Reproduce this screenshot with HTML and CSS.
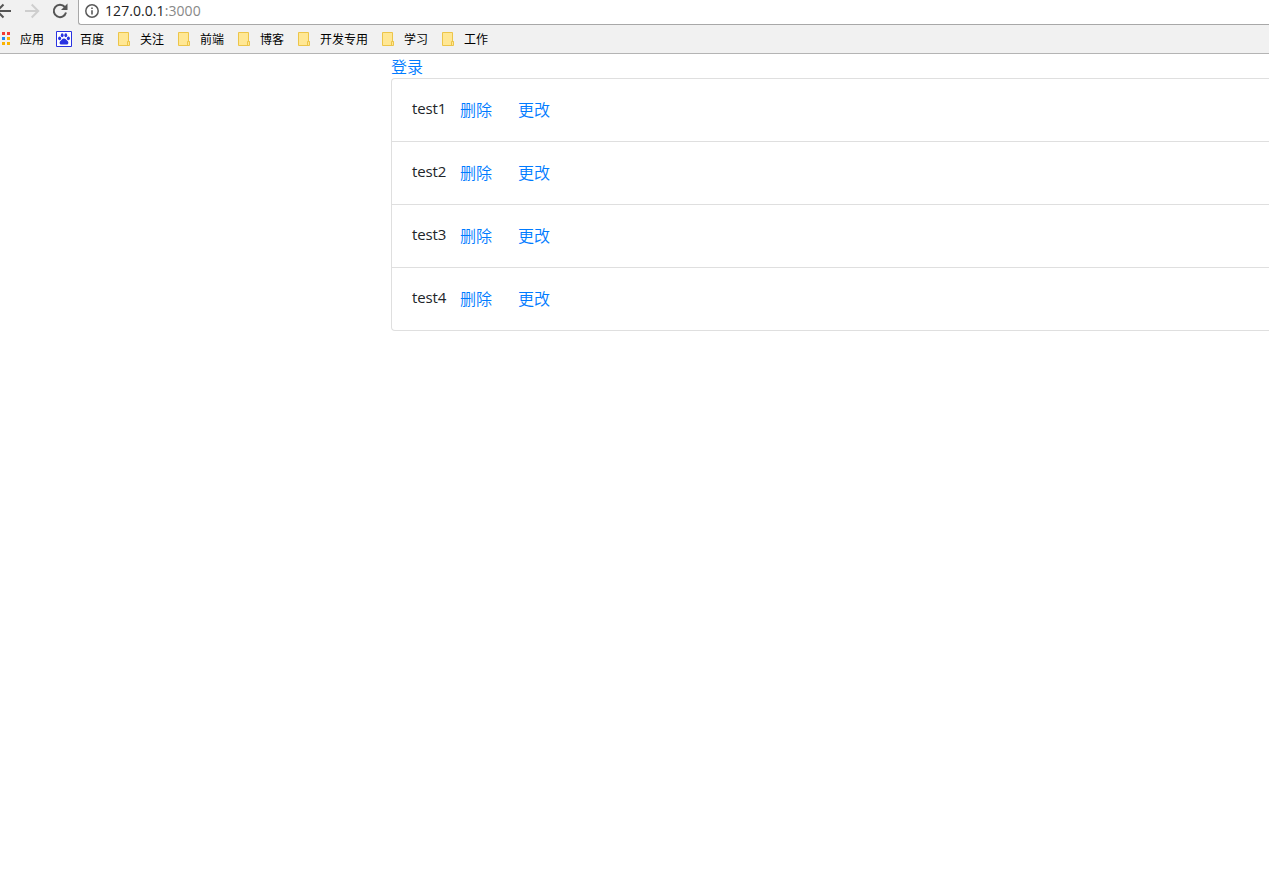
FILE: index.html
```
<!DOCTYPE html>
<html lang="zh-CN">
<head>
<meta charset="utf-8">
<title>127.0.0.1:3000</title>
<link rel="stylesheet" href="styles.css">
</head>
<body>
<svg width="0" height="0" class="defs">
  <symbol id="folder" viewBox="0 0 12 14"><path d="M.5.5h10v9h1v4H.5z" fill="#ffe794" stroke="#ecc54a"/><path d="M9.500 13V9.500h2" fill="none" stroke="#ecc54a"/></symbol>
</svg>
<header class="browser">
  <div class="toolbar">
    <svg class="nav" width="78" height="25" viewBox="0 0 78 25" fill="none" stroke-width="2">
      <path d="M11 11H-3M3.500 4.500L-3 11l6.500 6.500" stroke="#555"/>
      <path d="M25 11h13M31.700 4.500l6.500 6.500-6.500 6.500" stroke="#cecece"/>
      <path d="M64.800 7A6.200 6.200 0 1 0 66 12.500" stroke="#555"/>
      <path d="M67.500 3.500v6.500H61z" fill="#555"/>
    </svg>
    <div class="address">
      <svg width="14" height="14" viewBox="0 0 14 14"><circle cx="7" cy="7" r="6.200" fill="none" stroke="#5a5a5a" stroke-width="1.500"/><path d="M6.200 6.200h1.600v4.300H6.200zM6.200 3.400h1.600v1.600H6.200z" fill="#5a5a5a"/></svg>
      <span class="url">127.0.0.1<span class="port">:3000</span></span>
    </div>
  </div>
  <nav class="bookmarks">
    <a class="apps"><svg width="11" height="14" viewBox="0 0 11 14"><path d="M2 0h3v3H2zM7 0h3v3H7z" fill="#f23c34"/><path d="M2 5h3v3H2z" fill="#1e88f0"/><path d="M7 5h3v3H7zM2 10h3v3H2zM7 10h3v3H7z" fill="#fbb300"/></svg>应用</a>
    <a class="baidu"><svg width="16" height="16" viewBox="0 0 16 16"><path d="M.5.5h15v15H.5z" fill="#fff" stroke="#2932e1"/><g fill="#2932e1"><ellipse cx="3.600" cy="7.300" rx="1.500" ry="1.900"/><ellipse cx="6.200" cy="4.200" rx="1.400" ry="2"/><ellipse cx="9.800" cy="4.200" rx="1.400" ry="2"/><ellipse cx="12.400" cy="7.300" rx="1.500" ry="1.900"/><path d="M8 7.500c1.700 0 2.100 1.200 3.300 2.200 1.800 1.600 1.200 3.800-.8 3.800H5.500c-2 0-2.600-2.200-.8-3.800C5.900 8.700 6.300 7.500 8 7.500z"/></g></svg>百度</a>
    <a class="mark"><svg width="12" height="14"><use href="#folder"/></svg>关注</a>
    <a class="mark"><svg width="12" height="14"><use href="#folder"/></svg>前端</a>
    <a class="mark"><svg width="12" height="14"><use href="#folder"/></svg>博客</a>
    <a class="mark"><svg width="12" height="14"><use href="#folder"/></svg>开发专用</a>
    <a class="mark"><svg width="12" height="14"><use href="#folder"/></svg>学习</a>
    <a class="mark"><svg width="12" height="14"><use href="#folder"/></svg>工作</a>
  </nav>
</header>
<main class="page">
  <a class="link login">登录</a>
  <ul class="list">
    <li class="item"><span class="name">test1</span><a class="link remove">删除</a><a class="link">更改</a></li>
    <li class="item"><span class="name">test2</span><a class="link remove">删除</a><a class="link">更改</a></li>
    <li class="item"><span class="name">test3</span><a class="link remove">删除</a><a class="link">更改</a></li>
    <li class="item"><span class="name">test4</span><a class="link remove">删除</a><a class="link">更改</a></li>
  </ul>
</main>
</body>
</html>
```
FILE: styles.css
```
* { box-sizing: border-box; }
body { margin: 0; background: #fff; font-family: "Open Sans", "Noto Sans CJK SC", sans-serif; }
svg { flex: none; display: block; }
.defs { position: absolute; }
.browser { height: 54px; background: #f1f1f1; border-bottom: 1px solid #b4b4b4; }
.toolbar { display: flex; height: 25px; }
.nav { overflow: hidden; }
.address { flex: 1; height: 25px; display: flex; align-items: flex-start; padding: 4px 0 0 6px; background: #fff; border: solid #a8a8a8; border-width: 0 0 1px 1px; border-bottom-left-radius: 3px; }
.url { margin: -3px 0 0 6px; font-size: 14px; line-height: 20px; color: #222; letter-spacing: 0.07px; }
.port { color: #888; }
.bookmarks { display: flex; align-items: center; height: 28px; font-family: "Noto Sans CJK SC", sans-serif; font-size: 12px; line-height: 18px; color: #000; }
.bookmarks a { display: flex; align-items: center; }
.apps { gap: 9px; }
.baidu { gap: 8px; margin-left: 12px; }
.mark { gap: 10px; margin-left: 14px; }
.page { padding-left: 391px; }
.link { color: #007bff; font-family: "Noto Sans CJK SC", sans-serif; font-size: 16px; font-weight: 350; line-height: 24px; }
.login { display: block; }
.list { list-style: none; margin: 0; padding: 0; border: 1px solid #dfdfdf; border-right: 0; border-radius: 4px 0 0 4px; }
.item { display: flex; align-items: flex-start; height: 63px; padding: 18px 20px; }
.item + .item { border-top: 1px solid #dfdfdf; }
.item:first-child { height: 62px; }
.name { width: 48px; font-size: 15px; line-height: 22px; letter-spacing: -0.1px; color: #212529; }
.remove { width: 58px; }
```
